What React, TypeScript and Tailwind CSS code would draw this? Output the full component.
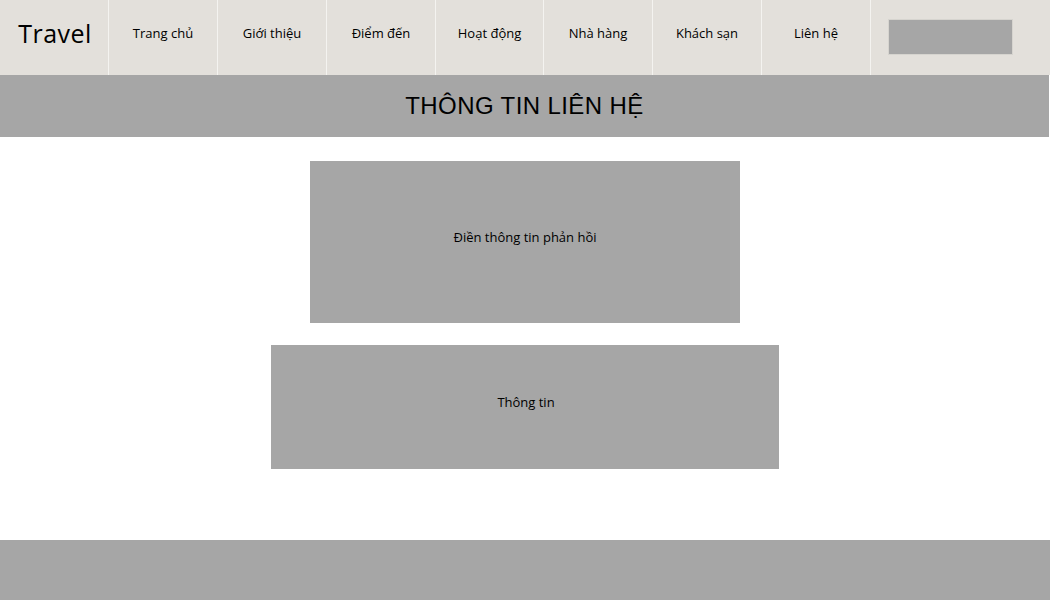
import React from 'react';

const navItems = [
  { label: 'Trang chủ', width: 'w-[109px]' },
  { label: 'Giới thiệu', width: 'w-[109px]' },
  { label: 'Điểm đến', width: 'w-[109px]' },
  { label: 'Hoạt động', width: 'w-[108px]' },
  { label: 'Nhà hàng', width: 'w-[109px]' },
  { label: 'Khách sạn', width: 'w-[109px]' },
  { label: 'Liên hệ', width: 'w-[109px]' },
];

const ContactPage = () => {
  return (
    <div className="w-[1050px] h-[600px] bg-white flex flex-col font-['Open_Sans',sans-serif] text-black">
      {/* Header */}
      <div className="flex h-[75px] bg-[#e3e0db]">
        <div className="w-[108px] flex items-center justify-center pl-[2px] pb-[7px]">
          <span className="text-[25px] tracking-[0.5px]">Travel</span>
        </div>
        {navItems.map((item) => (
          <div
            key={item.label}
            className={`${item.width} border-l border-[#f4f3f0] flex items-center justify-center pb-[8px]`}
          >
            <span className="text-[13px]">{item.label}</span>
          </div>
        ))}
        <div className="flex-1 border-l border-[#f4f3f0] pl-[17px] pt-[19px]">
          <div className="w-[125px] h-[36px] bg-[#a6a6a6] border border-[#d6d4cf]" />
        </div>
      </div>

      {/* Title band */}
      <div className="h-[62px] w-[1049px] bg-[#a6a6a6] flex items-center justify-center">
        <h1 className="text-[24px] font-['Liberation_Sans',sans-serif] tracking-[0.4px]">THÔNG TIN LIÊN HỆ</h1>
      </div>

      {/* Content */}
      <div className="flex-1 flex flex-col items-center pt-[24px] gap-[22px]">
        <div className="w-[430px] h-[162px] bg-[#a6a6a6] flex justify-center pt-[67px]">
          <span className="text-[13px]">Điền thông tin phản hồi</span>
        </div>
        <div className="w-[508px] h-[124px] bg-[#a6a6a6] flex items-center justify-center pb-[8px] pl-[2px]">
          <span className="text-[13px]">Thông tin</span>
        </div>
      </div>

      {/* Footer */}
      <div className="h-[60px] bg-[#a6a6a6]" />
    </div>
  );
};

export default function App() {
  return <ContactPage />;
}
